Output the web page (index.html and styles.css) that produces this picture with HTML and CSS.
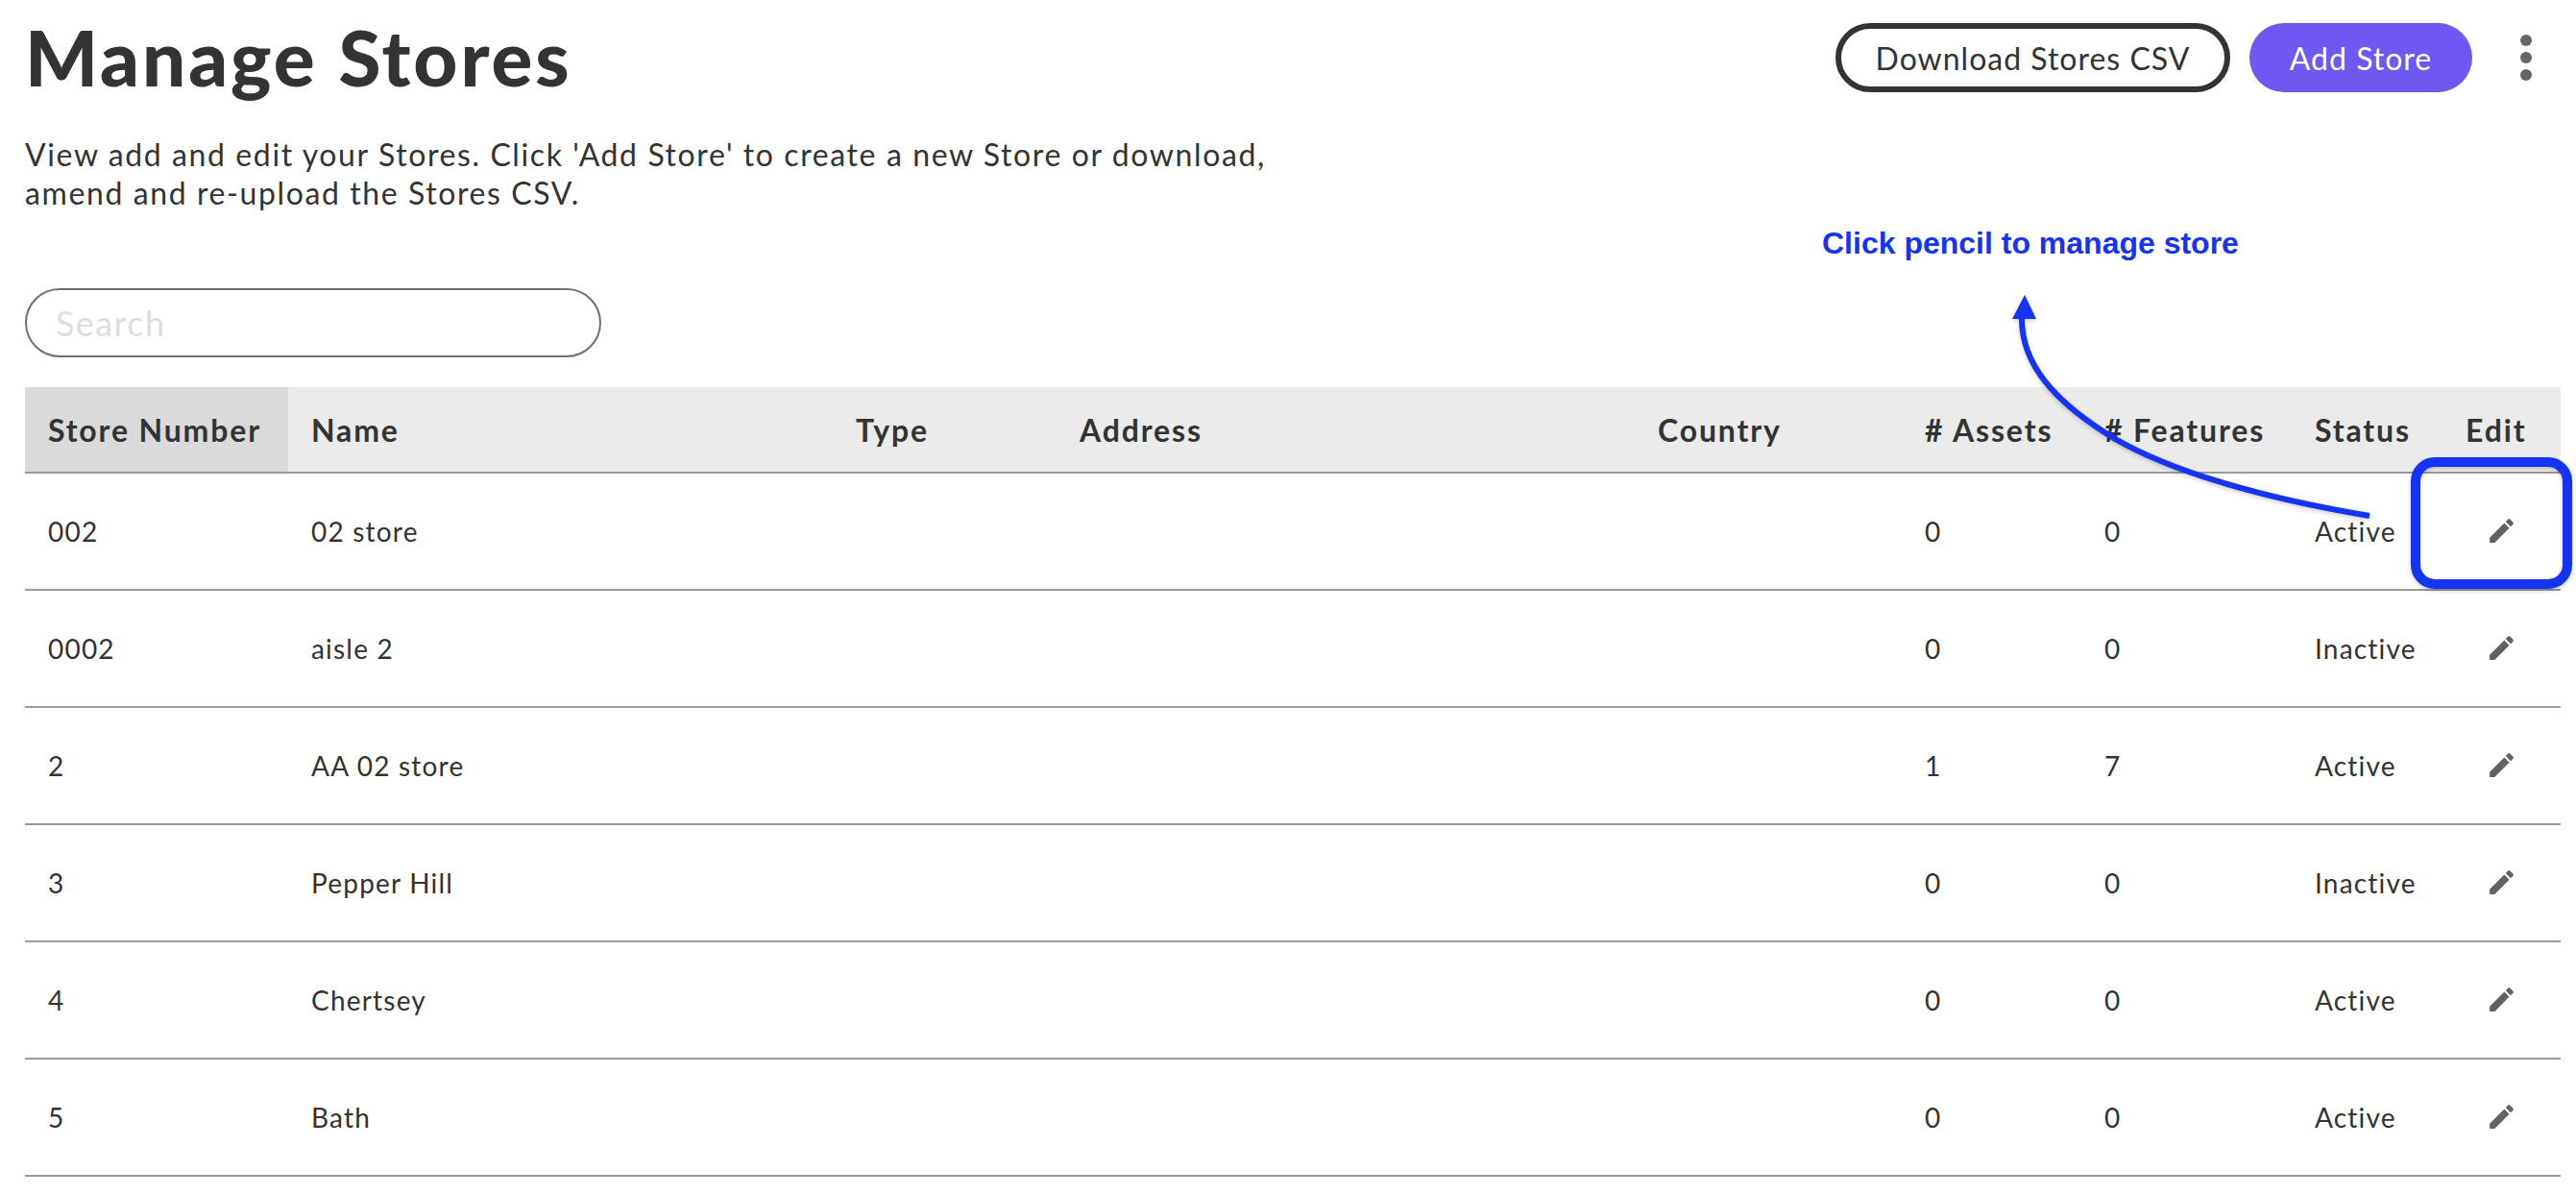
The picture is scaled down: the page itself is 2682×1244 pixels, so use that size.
FILE: index.html
```html
<!DOCTYPE html>
<html lang="en">
<head>
<meta charset="utf-8">
<title>Manage Stores</title>
<link rel="stylesheet" href="styles.css">
</head>
<body>
<main class="page">
  <header class="top">
    <h1 class="title">Manage Stores</h1>
    <div class="actions">
      <button class="btn btn-outline">Download Stores CSV</button>
      <button class="btn btn-primary">Add Store</button>
      <span class="kebab"><i></i><i></i><i></i></span>
    </div>
  </header>
  <p class="intro">View add and edit your Stores. Click 'Add Store' to create a new Store or download,<br>amend and re-upload the Stores CSV.</p>
  <input class="search" type="text" placeholder="Search">
  <table class="stores">
    <colgroup>
      <col class="c1"><col class="c2"><col class="c3"><col class="c4"><col class="c5"><col class="c6"><col class="c7"><col class="c8"><col class="c9">
    </colgroup>
    <thead>
      <tr><th class="sorted">Store Number</th><th>Name</th><th>Type</th><th>Address</th><th>Country</th><th># Assets</th><th># Features</th><th>Status</th><th>Edit</th></tr>
    </thead>
    <tbody>
      <tr><td>002</td><td>02 store</td><td></td><td></td><td></td><td>0</td><td>0</td><td>Active</td><td class="edit"><svg class="pencil" viewBox="0 0 24 24"><path d="M3 17.25V21h3.75L17.81 9.94l-3.75-3.75L3 17.25zM20.71 7.04a1 1 0 0 0 0-1.41l-2.34-2.34a1 1 0 0 0-1.41 0l-1.83 1.83 3.75 3.75 1.83-1.83z"/></svg></td></tr>
      <tr><td>0002</td><td>aisle 2</td><td></td><td></td><td></td><td>0</td><td>0</td><td>Inactive</td><td class="edit"><svg class="pencil" viewBox="0 0 24 24"><path d="M3 17.25V21h3.75L17.81 9.94l-3.75-3.75L3 17.25zM20.71 7.04a1 1 0 0 0 0-1.41l-2.34-2.34a1 1 0 0 0-1.41 0l-1.83 1.83 3.75 3.75 1.83-1.83z"/></svg></td></tr>
      <tr><td>2</td><td>AA 02 store</td><td></td><td></td><td></td><td>1</td><td>7</td><td>Active</td><td class="edit"><svg class="pencil" viewBox="0 0 24 24"><path d="M3 17.25V21h3.75L17.81 9.94l-3.75-3.75L3 17.25zM20.71 7.04a1 1 0 0 0 0-1.41l-2.34-2.34a1 1 0 0 0-1.41 0l-1.83 1.83 3.75 3.75 1.83-1.83z"/></svg></td></tr>
      <tr><td>3</td><td>Pepper Hill</td><td></td><td></td><td></td><td>0</td><td>0</td><td>Inactive</td><td class="edit"><svg class="pencil" viewBox="0 0 24 24"><path d="M3 17.25V21h3.75L17.81 9.94l-3.75-3.75L3 17.25zM20.71 7.04a1 1 0 0 0 0-1.41l-2.34-2.34a1 1 0 0 0-1.41 0l-1.83 1.83 3.75 3.75 1.83-1.83z"/></svg></td></tr>
      <tr><td>4</td><td>Chertsey</td><td></td><td></td><td></td><td>0</td><td>0</td><td>Active</td><td class="edit"><svg class="pencil" viewBox="0 0 24 24"><path d="M3 17.25V21h3.75L17.81 9.94l-3.75-3.75L3 17.25zM20.71 7.04a1 1 0 0 0 0-1.41l-2.34-2.34a1 1 0 0 0-1.41 0l-1.83 1.83 3.75 3.75 1.83-1.83z"/></svg></td></tr>
      <tr><td>5</td><td>Bath</td><td></td><td></td><td></td><td>0</td><td>0</td><td>Active</td><td class="edit"><svg class="pencil" viewBox="0 0 24 24"><path d="M3 17.25V21h3.75L17.81 9.94l-3.75-3.75L3 17.25zM20.71 7.04a1 1 0 0 0 0-1.41l-2.34-2.34a1 1 0 0 0-1.41 0l-1.83 1.83 3.75 3.75 1.83-1.83z"/></svg></td></tr>
    </tbody>
  </table>
</main>
<div class="note">Click pencil to manage store</div>
<svg class="overlay" viewBox="0 0 2682 1244" width="2682" height="1244">
  <path d="M2467 537C2330 514 2240 482 2191 450C2140 417 2105 380 2105 332" fill="none" stroke="#1433f5" stroke-width="6"/>
  <path d="M2108 307L2120 332L2095 332Z" fill="#1433f5"/>
  <rect x="2515" y="481" width="158" height="127" rx="20" fill="none" stroke="#1433f5" stroke-width="10"/>
</svg>
</body>
</html>
```
FILE: styles.css
```css
* { box-sizing: border-box; }
html, body { margin: 0; padding: 0; background: #fff; }
body {
  position: relative;
  width: 2682px;
  height: 1244px;
  overflow: hidden;
  font-family: Lato, "Noto Sans", sans-serif;
  color: #333;
}
.page { padding: 0 16px 0 26px; }
.top {
  display: flex;
  justify-content: space-between;
  align-items: flex-start;
  height: 141px;
}
.title {
  margin: 17px 0 0;
  font-size: 80px;
  line-height: 84px;
  font-weight: 900;
  letter-spacing: 2.9px;
}
.actions {
  display: flex;
  align-items: center;
  padding-top: 24px;
}
.btn {
  height: 72px;
  border-radius: 36px;
  font-family: inherit;
  font-size: 32px;
  font-weight: 400;
  letter-spacing: 1px;
}
.btn-outline {
  width: 411px;
  background: #fff;
  border: 6px solid #333;
  color: #333;
}
.btn-primary {
  width: 232px;
  margin-left: 20px;
  background: #6f57f2;
  border: 0;
  color: #fff;
}
.kebab {
  display: flex;
  flex-direction: column;
  gap: 6px;
  width: 12px;
  margin: 0 30px 0 50px;
}
.kebab i {
  display: block;
  width: 12px;
  height: 12px;
  border-radius: 50%;
  background: #666;
}
.intro {
  margin: 0;
  font-size: 32px;
  line-height: 40px;
  letter-spacing: 1.6px;
}
.search {
  display: block;
  width: 600px;
  height: 72px;
  margin-top: 79px;
  padding: 0 30px;
  border: 2px solid #707070;
  border-radius: 36px;
  background: #fff;
  font-family: inherit;
  font-size: 36px;
  letter-spacing: 1.4px;
  outline: none;
}
.search::placeholder { color: #ddd; opacity: 1; }
.stores {
  width: 2640px;
  margin-top: 31px;
  border-collapse: collapse;
  table-layout: fixed;
}
.c1 { width: 274px; }
.c2 { width: 567px; }
.c3 { width: 233px; }
.c4 { width: 602px; }
.c5 { width: 278px; }
.c6 { width: 187px; }
.c7 { width: 219px; }
.c8 { width: 157px; }
.c9 { width: 123px; }
.stores th {
  height: 89px;
  padding: 0 0 0 24px;
  background: #ebebeb;
  border-bottom: 2px solid #999;
  font-size: 32px;
  font-weight: 700;
  letter-spacing: 1.85px;
  text-align: left;
  white-space: nowrap;
}
.stores th.sorted { background: #dadada; }
.stores td {
  height: 122px;
  padding: 0 0 0 24px;
  border-bottom: 2px solid #999;
  font-size: 28px;
  letter-spacing: 1.2px;
  white-space: nowrap;
}
.stores td.edit { padding: 0; }
.pencil { display: block; width: 33px; height: 33px; margin: -2px auto 0; fill: #616161; }
.note {
  position: absolute;
  left: 1897px;
  top: 235px;
  font-family: "Liberation Sans", Arial, sans-serif;
  font-size: 32px;
  line-height: 37px;
  font-weight: 700;
  color: #1433f5;
  white-space: nowrap;
}
.overlay {
  position: absolute;
  left: 0;
  top: 0;
  pointer-events: none;
  filter: drop-shadow(0 2px 2px rgba(0, 0, 0, 0.2));
}
```
